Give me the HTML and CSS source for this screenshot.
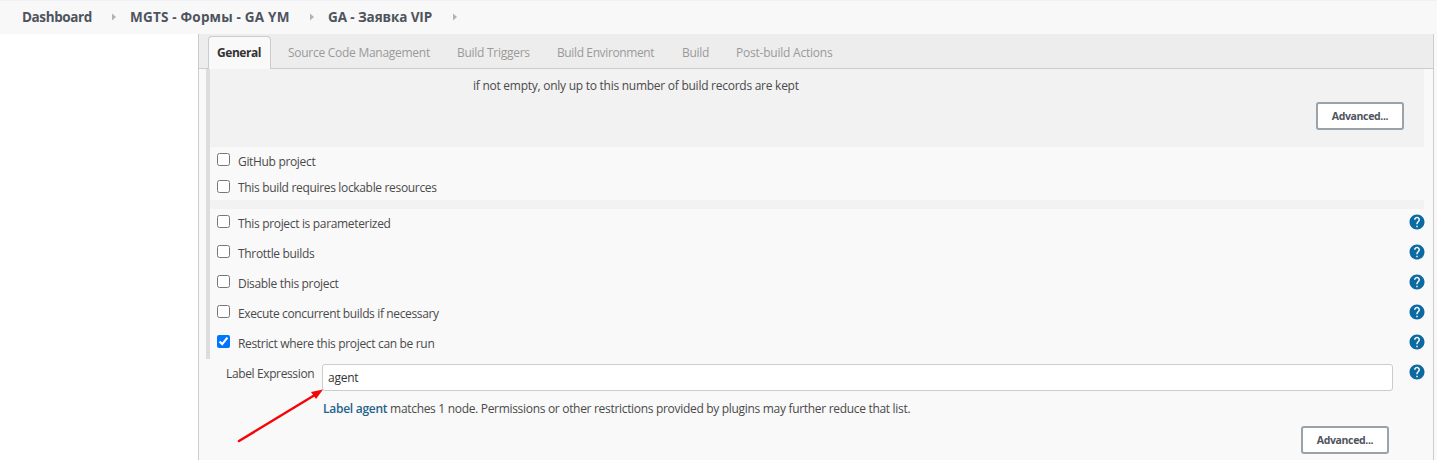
FILE: index.html
```html
<!DOCTYPE html>
<html lang="en">
<head>
<meta charset="utf-8">
<title>GA - Заявка VIP Config</title>
<link rel="stylesheet" href="styles.css">
</head>
<body>
<svg class="defs" aria-hidden="true">
  <symbol id="help" viewBox="0 0 24 24"><path d="M12 2C6.48 2 2 6.48 2 12s4.480 10 10 10 10-4.480 10-10S17.520 2 12 2zm1 17h-2v-2h2v2zm2.070-7.750-.9.920C13.450 12.900 13 13.500 13 15h-2v-.5c0-1.100.450-2.100 1.170-2.830l1.240-1.260c.370-.360.590-.860.590-1.410 0-1.100-.9-2-2-2s-2 .9-2 2H8c0-2.210 1.790-4 4-4s4 1.790 4 4c0 .880-.360 1.680-.930 2.250z"/></symbol>
  <symbol id="sep" viewBox="0 0 4 8"><path d="M0 0.500L4 4L0 7.500z"/></symbol>
</svg>
<nav class="breadcrumbs">
  <a class="crumb c1">Dashboard</a><svg class="sep"><use href="#sep"/></svg>
  <a class="crumb c2">MGTS - Формы - GA YM</a><svg class="sep"><use href="#sep"/></svg>
  <a class="crumb c3">GA - Заявка VIP</a><svg class="sep"><use href="#sep"/></svg>
</nav>
<div class="page">
  <aside class="side"></aside>
  <main class="panel">
    <div class="tabs">
      <div class="tab active">General</div>
      <div class="tab t-scm">Source Code Management</div>
      <div class="tab t-trig">Build Triggers</div>
      <div class="tab t-env">Build Environment</div>
      <div class="tab t-build">Build</div>
      <div class="tab t-post">Post-build Actions</div>
    </div>
    <div class="group">
      <section class="discard">
        <p class="hint"><span>if not empty, only up to this number of build records are kept</span></p>
        <button class="btn">Advanced...</button>
      </section>
      <div class="row r27"><input type="checkbox"><label>GitHub project</label></div>
      <div class="row r26"><input type="checkbox"><label>This build requires lockable resources</label></div>
      <div class="strip"></div>
      <div class="row"><input type="checkbox"><label>This project is parameterized</label><svg class="help"><use href="#help"/></svg></div>
      <div class="row"><input type="checkbox"><label>Throttle builds</label><svg class="help"><use href="#help"/></svg></div>
      <div class="row"><input type="checkbox"><label>Disable this project</label><svg class="help"><use href="#help"/></svg></div>
      <div class="row"><input type="checkbox"><label class="tight">Execute concurrent builds if necessary</label><svg class="help"><use href="#help"/></svg></div>
      <div class="row"><input type="checkbox" checked><label>Restrict where this project can be run</label><svg class="help"><use href="#help"/></svg></div>
    </div>
    <div class="field">
      <label class="field-label">Label Expression</label>
      <input class="text" type="text" value="agent">
      <svg class="help"><use href="#help"/></svg>
    </div>
    <p class="match"><b>Label agent</b> <span>matches 1 node. Permissions or other restrictions provided by plugins may further reduce that list.</span></p>
    <button class="btn last">Advanced...</button>
  </main>
</div>
<svg class="arrow" viewBox="0 0 90 58"><path class="shaft" d="M4 53L79 7.500"/><path class="head" d="M88 1.500L81 11L76 4z"/></svg>
</body>
</html>
```
FILE: styles.css
```css
* { box-sizing: border-box; }
body {
  margin: 0;
  height: 460px;
  overflow: hidden;
  background: #fff;
  color: #4a4a4a;
  font: 12px/18px "Open Sans", "Noto Sans", sans-serif;
  letter-spacing: -.33px;
}
p { margin: 0; }
.defs { position: absolute; width: 0; height: 0; }

.breadcrumbs {
  display: flex;
  align-items: center;
  height: 34px;
  padding: 0 0 1px 22px;
  border-top: 1px solid #f1f2f5;
  background: #f8f8f8;
  color: #4d545d;
  font-size: 13.5px;
  font-weight: 700;
  white-space: nowrap;
}
.c1 { width: 90px; letter-spacing: -.4px; }
.c2 { width: 180px; letter-spacing: .2px; }
.c3 { width: 125px; letter-spacing: -.1px; }
.sep { width: 4px; height: 8px; margin-right: 14px; fill: #b3b3b3; }

.page { display: flex; height: 426px; }
.side { width: 198px; }
.panel {
  width: 1236px;
  border: solid #ccc;
  border-width: 0 1px;
  background: #f9f9f9;
}
.page::after { content: ""; flex: 1; background: #f9f9f9; }

.tabs {
  display: flex;
  height: 35px;
  padding: 2px 0 0 9px;
  border-bottom: 1px solid #ccc;
  background: #ededed;
  color: #9a9a9a;
  line-height: 34px;
  letter-spacing: -.27px;
  white-space: nowrap;
}
.active {
  width: 63px;
  height: 33px;
  margin-right: 17px;
  padding-left: 8px;
  border: 1px solid #ccc;
  border-bottom: 0;
  border-radius: 4px 4px 0 0;
  background: #f9f9f9;
  color: #333;
  font-weight: 700;
  line-height: 32px;
  letter-spacing: -.45px;
}
.t-scm { width: 169px; }
.t-trig { width: 100px; }
.t-env { width: 125px; letter-spacing: -.38px; }
.t-build { width: 54px; }
.t-post { letter-spacing: -.22px; }

.group {
  width: 1218px;
  height: 290px;
  margin-left: 7px;
  border-left: 4px solid #ddd;
}
.discard {
  display: flex;
  flex-direction: column;
  height: 78px;
  padding: 8px 20px 0 263px;
  background: #f2f2f2;
  letter-spacing: -.26px;
}
.btn {
  width: 88px;
  height: 28px;
  align-self: flex-end;
  margin-top: 7px;
  padding: 0;
  border: 2px solid #98a3ab;
  border-radius: 3px;
  background: #fff;
  color: #4d545d;
  font: 700 10.5px "Open Sans", "Noto Sans", sans-serif;
  letter-spacing: -.35px;
}
.row { display: flex; align-items: center; height: 30px; }
.row .tight { letter-spacing: -.36px; }
.r27 { height: 27px; }
.r26 { height: 26px; }
.row input { width: 13px; height: 13px; margin: -5px 8px 0 7px; }
.r27 label, .r26 label { margin-top: 2px; }
.r27 input, .r26 input { margin-top: -2px; }
.strip { height: 9px; background: #f2f2f2; }
.help { width: 18px; height: 18px; margin: -5px -2px 0 auto; fill: #0b6aa2; }

.field { display: flex; height: 32px; padding: 5px 8px 0 27px; }
.field-label { width: 96px; line-height: 19px; letter-spacing: -.37px; white-space: nowrap; }
.text {
  width: 1071px;
  height: 27px;
  padding: 0 5px;
  border: 1px solid #ccc;
  border-radius: 3px;
  background: #fff;
  color: #333;
  font: inherit;
  letter-spacing: -.25px;
}
.field .help { margin: -1px -1px 0 auto; }
.match { padding: 9px 0 0 124px; letter-spacing: -.31px; white-space: nowrap; }
.match b { color: #25638b; font-weight: 600; letter-spacing: -.27px; }
.last { display: block; margin: 8px 0 0 1102px; }

.arrow { position: absolute; left: 235px; top: 388px; width: 90px; height: 58px; }
.shaft { fill: none; stroke: #f40606; stroke-width: 2.5; stroke-linecap: round; }
.head { fill: #f40606; }
```
